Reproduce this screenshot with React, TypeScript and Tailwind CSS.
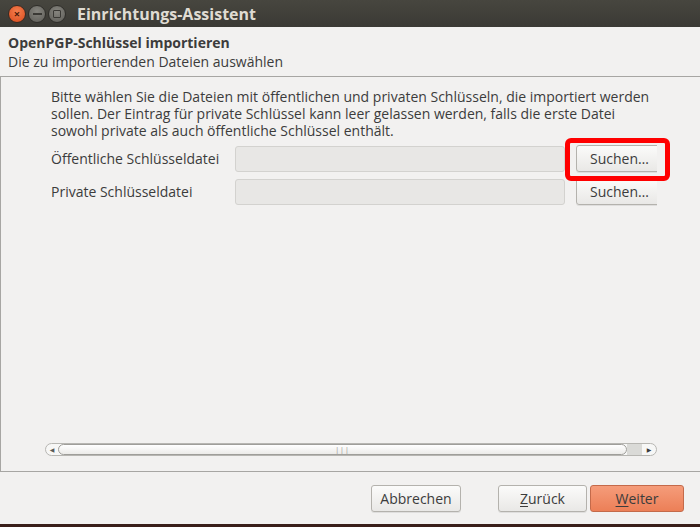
import React from "react";

const font = { fontFamily: '"Open Sans", "DejaVu Sans", sans-serif' };

function WinButton({ kind }: { kind: "close" | "min" | "max" }) {
	if (kind === "close") {
		return (
			<span className="flex size-[18px] items-center justify-center rounded-full border border-[#3a2a22] bg-[radial-gradient(circle_at_50%_35%,#f47f4f,#d94a1c)]">
				<span className="text-[11px] font-bold leading-none text-[#4a1a08]">×</span>
			</span>
		);
	}
	return (
		<span className="flex size-[18px] items-center justify-center rounded-full border border-[#2f2e2a] bg-[radial-gradient(circle_at_50%_35%,#86857f,#5d5c57)]">
			{kind === "min" ? (
				<span className="h-[2px] w-[9px] bg-[#3a3935]" />
			) : (
				<span className="size-[8px] rounded-[1px] border border-[#3a3935]" />
			)}
		</span>
	);
}

function GtkButton({ children, className = "" }: { children: React.ReactNode; className?: string }) {
	return (
		<div
			className={
				"flex items-center justify-center rounded-[3px] border border-[#b4b2ad] bg-linear-to-b from-[#fbfbfa] to-[#e9e8e6] text-[14px] text-[#3c3c3c] shadow-[0_1px_0_rgba(0,0,0,0.08)] " +
				className
			}
		>
			{children}
		</div>
	);
}

export default function App() {
	return (
		<div className="relative h-[527px] w-[700px] overflow-hidden bg-[#3a1f1a]" style={font}>
			<div className="flex h-[524px] flex-col bg-[#f2f1f0]">
				{/* Titelleiste */}
				<div className="flex h-[27px] shrink-0 items-center bg-linear-to-b from-[#47463f] to-[#3b3a35] pl-[8px]">
					<div className="flex items-center gap-[2px]">
						<WinButton kind="close" />
						<WinButton kind="min" />
						<WinButton kind="max" />
					</div>
					<span className="ml-[11px] text-[16px] font-bold text-[#dfdbd2]">Einrichtungs-Assistent</span>
				</div>

				{/* Kopfbereich */}
				<div className="flex h-[50px] shrink-0 flex-col justify-center border-b border-[#a7a6a3] pl-[8px] text-[14px] leading-[19px] text-[#3c3c3c]">
					<span className="font-bold">OpenPGP-Schlüssel importieren</span>
					<span>Die zu importierenden Dateien auswählen</span>
				</div>

				{/* Inhalt */}
				<div className="flex flex-1 flex-col border-l border-[#a7a6a3] pl-[44px] pr-[43px]">
					<div className="flex flex-1 flex-col overflow-hidden pt-[11px] text-[14px] text-[#3c3c3c]">
						<div className="whitespace-nowrap pl-[6px] leading-[17px]">
							<div>Bitte wählen Sie die Dateien mit öffentlichen und privaten Schlüsseln, die importiert werden</div>
							<div>sollen. Der Eintrag für private Schlüssel kann leer gelassen werden, falls die erste Datei</div>
							<div>sowohl private als auch öffentliche Schlüssel enthält.</div>
						</div>
						<div className="mt-[6px] flex flex-col gap-[6px] pl-[6px]">
							{["Öffentliche Schlüsseldatei", "Private Schlüsseldatei"].map((label) => (
								<div key={label} className="flex items-center">
									<span className="w-[184px] shrink-0 whitespace-nowrap">{label}</span>
									<div className="h-[26px] w-[330px] shrink-0 rounded-[3px] border border-[#d3d2cf] bg-[#e8e7e5]" />
									<GtkButton className="ml-[11px] h-[27px] w-[96px] shrink-0 justify-start pl-[13px]">
										Suchen…
									</GtkButton>
								</div>
							))}
						</div>
					</div>

					{/* Horizontale Bildlaufleiste */}
					<div className="mb-[15px] flex h-[13px] items-center">
						<div className="flex h-[13px] flex-1 items-center rounded-full border border-[#b7b6b2] bg-[#f7f7f6]">
							<span className="flex w-[12px] shrink-0 items-center justify-center text-[6px] leading-none text-[#5a5a5a]">◀</span>
							<div className="flex h-[11px] flex-1 items-center justify-center rounded-full border border-[#9f9e9a] bg-linear-to-b from-[#ffffff] to-[#ecebe9] text-[7px] leading-none tracking-[1px] text-[#8a8986]">
								|||
							</div>
							<div className="h-[11px] w-[15px] shrink-0 bg-[#dadad7]" />
							<span className="flex w-[14px] shrink-0 items-center justify-center text-[6px] leading-none text-[#3c3c3c]">▶</span>
						</div>
					</div>
				</div>

				{/* Schaltflächen */}
				<div className="flex h-[53px] shrink-0 items-center border-t border-[#a7a6a3] pr-[16px]">
					<GtkButton className="ml-[371px] h-[27px] w-[90px]">Abbrechen</GtkButton>
					<GtkButton className="ml-[37px] h-[27px] w-[89px]">
						<span className="underline decoration-1 underline-offset-2">Z</span>urück
					</GtkButton>
					<div className="ml-[3px] flex h-[27px] w-[94px] items-center justify-center rounded-[3px] border border-[#c46a4a] bg-linear-to-b from-[#f59c7a] to-[#ec7f57] text-[14px] text-[#3c3c3c]">
						<span className="underline decoration-1 underline-offset-2">W</span>eiter
					</div>
				</div>
			</div>

			{/* Rote Markierung */}
			<div className="absolute left-[565px] top-[138px] h-[43px] w-[105px] rounded-[6px] border-[5px] border-[#ff0000]" />
		</div>
	);
}
